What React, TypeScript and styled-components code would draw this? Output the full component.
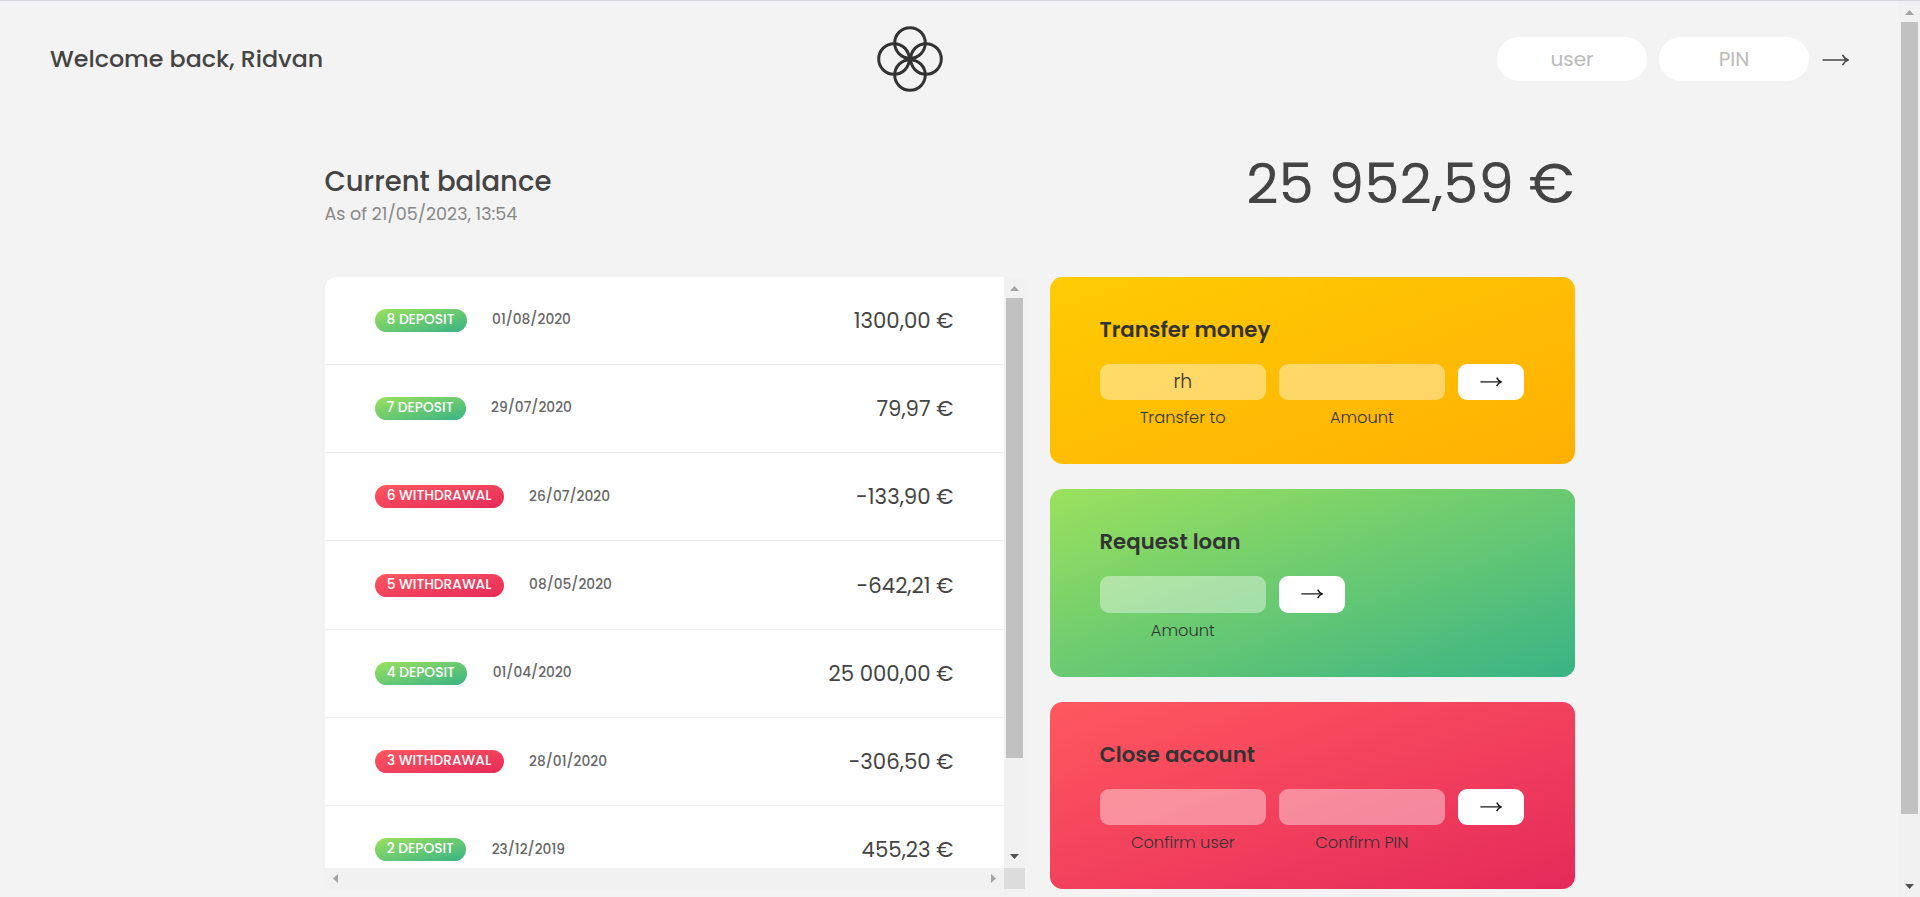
import React from "react";
import styled, { createGlobalStyle, css } from "styled-components";

const GlobalStyle = createGlobalStyle`
  *, *::before, *::after { box-sizing: border-box; margin: 0; padding: 0; }
  body {
    margin: 0;
    overflow: hidden;
    background: #f3f3f3;
    color: #444;
    font-family: Poppins, Inter, "Open Sans", sans-serif;
  }
  input, button { font: inherit; border: none; outline: none; }
`;

const gradients = {
  yellow: "linear-gradient(to top left, #ffb003, #ffcb03)",
  green: "linear-gradient(to top left, #39b385, #9be15d)",
  red: "linear-gradient(to top left, #e52a5a, #ff585f)",
};
type Tone = keyof typeof gradients;

const Window = styled.div`
  display: flex;
  height: 897px;
  overflow: hidden;
  border-top: 1px solid #d2d6da;
`;

const Page = styled.div`
  flex: 1;
  min-width: 0;
`;

const Nav = styled.nav`
  display: flex;
  justify-content: space-between;
  align-items: center;
  height: 115px;
  padding: 0 50px;
`;

const Text = styled.span`
  white-space: nowrap;
`;

const Welcome = styled(Text)`
  width: 273px;
  font-size: 23.75px;
  font-weight: 500;
`;

const Login = styled.form`
  display: flex;
  align-items: center;
  gap: 12px;
`;

const LoginInput = styled.input`
  width: 150px;
  height: 44px;
  border-radius: 22px;
  background: #fff;
  text-align: center;
  font-size: 20px;
  &::placeholder { color: #bbb; opacity: 1; }
`;

const LoginButton = styled.button`
  display: flex;
  width: 28px;
  background: none;
  padding: 3px 0 0 1px;
`;

const Main = styled.main`
  width: 1250px;
  margin: 0 auto;
  padding-top: 46px;
`;

const Balance = styled.section`
  display: flex;
  justify-content: space-between;
  height: 114.6px;
`;

const BalanceLabel = styled.div`
  display: flex;
  flex-direction: column;
`;

const BalanceTitle = styled(Text)`
  font-size: 27.5px;
  font-weight: 500;
  line-height: 40px;
`;

const BalanceDate = styled(Text)`
  font-size: 17.5px;
  line-height: 25px;
  color: #888;
`;

const BalanceValue = styled(Text)`
  font-size: 56.25px;
  line-height: 44px;
`;

const Columns = styled.div`
  display: grid;
  grid-template-columns: 700px 525px;
  gap: 25px;
  height: 612px;
`;

const Movements = styled.section`
  display: grid;
  grid-template: 591px 21px / 679px 21px;
  overflow: hidden;
  border-radius: 12px 0 0 0;
`;

const List = styled.div`
  overflow: hidden;
  background: #fff;
`;

const Row = styled.div`
  display: flex;
  align-items: center;
  height: 88.27px;
  padding: 0 50px;
  border-bottom: 1px solid #eee;
`;

const Badge = styled(Text)<{ $tone: Tone; $width: number }>`
  width: ${(p) => p.$width}px;
  height: 23px;
  margin-right: 25.6px;
  border-radius: 12px;
  background: ${(p) => gradients[p.$tone]};
  color: #fff;
  font-size: 13.75px;
  font-weight: 500;
  line-height: 22.6px;
  text-align: center;
`;

const RowDate = styled(Text)`
  font-size: 13.75px;
  font-weight: 500;
  line-height: 18px;
  color: #666;
`;

const RowAmount = styled(Text)`
  margin-left: auto;
  font-size: 21.25px;
`;

const Cards = styled.div`
  display: grid;
  grid-template-rows: repeat(3, 187.5px);
  gap: 25px;
`;

const Card = styled.section<{ $tone: Tone }>`
  padding: 38.4px 49.7px 0 50px;
  border-radius: 12.5px;
  background: ${(p) => gradients[p.$tone]};
  color: #333;
`;

const CardTitle = styled.h2`
  margin-bottom: 18.6px;
  font-size: 21.25px;
  font-weight: 600;
  line-height: 30px;
`;

const Form = styled.form`
  display: flex;
  align-items: flex-start;
  gap: 12.5px;
`;

const Field = styled.label`
  display: flex;
  flex-direction: column;
  width: 166.6px;
  text-align: center;
`;

const FieldInput = styled.input`
  width: 100%;
  height: 36.5px;
  border-radius: 9px;
  background: rgba(255, 255, 255, 0.4);
  color: #333;
  text-align: center;
  font-size: 18.75px;
  font-weight: 300;
`;

const FieldLabel = styled(Text)`
  margin-top: 5px;
  font-size: 16.25px;
  font-weight: 300;
  line-height: 25px;
`;

const CardButton = styled.button`
  display: flex;
  align-items: center;
  justify-content: center;
  width: 66.8px;
  height: 36.5px;
  border-radius: 9px;
  background: #fff;
`;

const track = css`
  display: flex;
  align-items: center;
  justify-content: space-between;
  background: #f1f1f1;
`;

const VerticalBar = styled.div<{ $top: number; $bottom: number }>`
  ${track}
  flex-direction: column;
  width: 21px;
  padding: ${(p) => p.$top}px 0 ${(p) => p.$bottom}px;
`;

const Thumb = styled.div<{ $size: number; $offset: number }>`
  width: 17px;
  height: ${(p) => p.$size}px;
  margin: ${(p) => p.$offset}px 0 auto;
  background: #c1c1c1;
`;

const HorizontalBar = styled.div`
  ${track}
  padding: 0 8px;
`;

const Corner = styled.div`
  background: #dcdcdc;
`;

const points = {
  up: "0,5 4.5,0 9,5",
  down: "0,0 9,0 4.5,5",
  left: "5,0 5,9 0,4.5",
  right: "0,0 5,4.5 0,9",
};

const CaretIcon = styled.svg`
  display: block;
`;

function Caret({ dir, dark }: { dir: keyof typeof points; dark?: boolean }) {
  const vertical = dir === "up" || dir === "down";
  return (
    <CaretIcon width={vertical ? 9 : 5} height={vertical ? 5 : 9}>
      <polygon points={points[dir]} fill={dark ? "#505050" : "#a3a3a3"} />
    </CaretIcon>
  );
}

function Arrow({ width, color }: { width: number; color: string }) {
  return (
    <svg width={width} height={(width * 12) / 27} viewBox="0 0 27 12" fill="none" stroke={color}>
      <path d="M0.5 6H25" strokeWidth="1.5" />
      <path d="M20.5 0.8C21.6 3.2 23.3 5 26 6C23.3 7 21.6 8.8 20.5 11.2" strokeWidth="1.7" />
    </svg>
  );
}

function Logo() {
  return (
    <svg width="66" height="66" viewBox="0 0 66 66" fill="none" stroke="#333" strokeWidth="3">
      <circle cx="33" cy="17" r="15.3" />
      <circle cx="33" cy="49" r="15.3" />
      <circle cx="17" cy="33" r="15.3" />
      <circle cx="49" cy="33" r="15.3" />
    </svg>
  );
}

const movements: { n: number; out?: boolean; w: number; date: string; amount: string }[] = [
  { n: 8, w: 92, date: "01/08/2020", amount: "1300,00 €" },
  { n: 7, w: 91, date: "29/07/2020", amount: "79,97 €" },
  { n: 6, out: true, w: 129, date: "26/07/2020", amount: "-133,90 €" },
  { n: 5, out: true, w: 129, date: "08/05/2020", amount: "-642,21 €" },
  { n: 4, w: 92.6, date: "01/04/2020", amount: "25 000,00 €" },
  { n: 3, out: true, w: 129, date: "28/01/2020", amount: "-306,50 €" },
  { n: 2, w: 91.6, date: "23/12/2019", amount: "455,23 €" },
];

const operations: { title: string; tone: Tone; fields: { label: string; value?: string }[] }[] = [
  { title: "Transfer money", tone: "yellow", fields: [{ label: "Transfer to", value: "rh" }, { label: "Amount" }] },
  { title: "Request loan", tone: "green", fields: [{ label: "Amount" }] },
  { title: "Close account", tone: "red", fields: [{ label: "Confirm user" }, { label: "Confirm PIN" }] },
];

export default function App() {
  return (
    <>
      <GlobalStyle />
      <Window>
        <Page>
          <Nav>
            <Welcome>Welcome back, Ridvan</Welcome>
            <Logo />
            <Login>
              <LoginInput placeholder="user" />
              <LoginInput placeholder="PIN" />
              <LoginButton type="button" aria-label="Log in">
                <Arrow width={27} color="#444" />
              </LoginButton>
            </Login>
          </Nav>
          <Main>
            <Balance>
              <BalanceLabel>
                <BalanceTitle>Current balance</BalanceTitle>
                <BalanceDate>As of 21/05/2023, 13:54</BalanceDate>
              </BalanceLabel>
              <BalanceValue>25 952,59 €</BalanceValue>
            </Balance>
            <Columns>
              <Movements>
                <List>
                  {movements.map((m) => (
                    <Row key={m.n}>
                      <Badge $tone={m.out ? "red" : "green"} $width={m.w}>
                        {m.n} {m.out ? "WITHDRAWAL" : "DEPOSIT"}
                      </Badge>
                      <RowDate>{m.date}</RowDate>
                      <RowAmount>{m.amount}</RowAmount>
                    </Row>
                  ))}
                </List>
                <VerticalBar $top={9} $bottom={9}>
                  <Caret dir="up" />
                  <Thumb $size={460} $offset={7} />
                  <Caret dir="down" dark />
                </VerticalBar>
                <HorizontalBar>
                  <Caret dir="left" />
                  <Caret dir="right" />
                </HorizontalBar>
                <Corner />
              </Movements>
              <Cards>
                {operations.map((o) => (
                  <Card key={o.title} $tone={o.tone}>
                    <CardTitle>{o.title}</CardTitle>
                    <Form>
                      {o.fields.map((f) => (
                        <Field key={f.label}>
                          <FieldInput defaultValue={f.value} />
                          <FieldLabel>{f.label}</FieldLabel>
                        </Field>
                      ))}
                      <CardButton type="button" aria-label={o.title}>
                        <Arrow width={22} color="#111" />
                      </CardButton>
                    </Form>
                  </Card>
                ))}
              </Cards>
            </Columns>
          </Main>
        </Page>
        <VerticalBar $top={9} $bottom={8}>
          <Caret dir="up" />
          <Thumb $size={792} $offset={7} />
          <Caret dir="down" dark />
        </VerticalBar>
      </Window>
    </>
  );
}
